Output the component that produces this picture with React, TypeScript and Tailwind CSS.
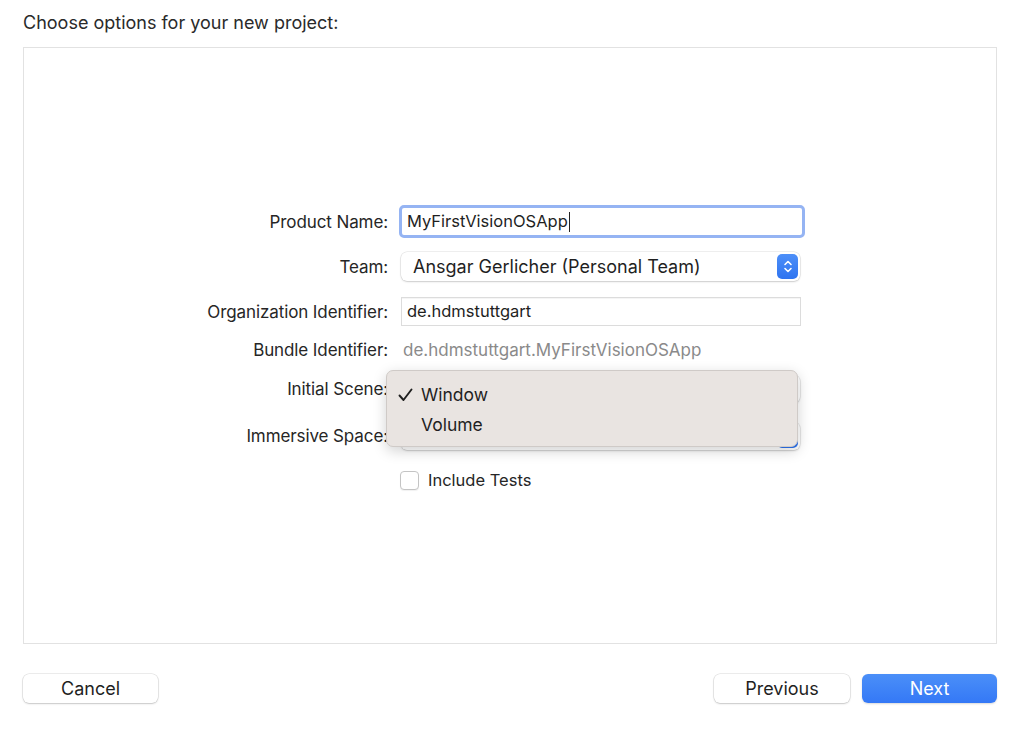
import React from "react";

const font = { fontFamily: 'Inter, "Liberation Sans", sans-serif' };

function Stepper() {
  return (
    <div className="flex h-[25px] w-[21px] items-center justify-center rounded-[5px] bg-gradient-to-b from-[#4d8ff8] to-[#2f74f0]">
      <svg width="10" height="15" viewBox="0 0 10 15" fill="none">
        <path d="M2 5.5 L5 2.5 L8 5.5" stroke="white" strokeWidth="1.6" strokeLinecap="round" strokeLinejoin="round" />
        <path d="M2 9.5 L5 12.5 L8 9.5" stroke="white" strokeWidth="1.6" strokeLinecap="round" strokeLinejoin="round" />
      </svg>
    </div>
  );
}

function Label({ children }: { children: React.ReactNode }) {
  return <div className="w-[364px] shrink-0 whitespace-nowrap pt-[2px] text-right text-[17px] tracking-[-0.1px] text-[#262626]">{children}</div>;
}

export default function App() {
  return (
    <div className="flex h-[730px] w-[1024px] flex-col bg-white text-[#262626]" style={font}>
      <div className="pl-[23px] pt-[10px] text-[18px] leading-[26px] text-[#2a2a2a]">Choose options for your new project:</div>
      <div className="relative ml-[23px] mr-[27px] mt-[11px] h-[597px] border border-[#e2e2e2] bg-white">
        <div className="flex flex-col pt-[157px]">
          {/* Product Name */}
          <div className="flex h-[33px] items-center">
            <Label>Product Name:</Label>
            <div className="ml-[11px] h-[33px] w-[406px] rounded-[5px] border-[3px] border-[#95b4f3] bg-white px-[5px]">
              <div className="flex h-full items-center text-[16.5px] text-[#1f1f1f]">
                MyFirstVisionOSApp<span className="ml-[1px] h-[20px] w-[1px] bg-[#222]" />
              </div>
            </div>
          </div>
          {/* Team */}
          <div className="mt-[14px] flex h-[29px] items-center">
            <Label>Team:</Label>
            <div className="ml-[13px] flex h-[29px] w-[399px] items-center justify-between rounded-[6px] bg-white pl-[12px] pr-[2px] shadow-[0_0_0_0.5px_rgba(0,0,0,0.12),0_1px_2px_rgba(0,0,0,0.15)]">
              <span className="text-[18px] text-[#1f1f1f]">Ansgar Gerlicher (Personal Team)</span>
              <Stepper />
            </div>
          </div>
          {/* Org */}
          <div className="mt-[16px] flex h-[29px] items-center">
            <Label>Organization Identifier:</Label>
            <div className="ml-[13px] flex h-[29px] w-[400px] items-center border border-[#dcdcdc] bg-white px-[5px] text-[16.5px] text-[#1f1f1f] shadow-[inset_0_1px_0_rgba(0,0,0,0.04)]">
              de.hdmstuttgart
            </div>
          </div>
          {/* Bundle */}
          <div className="mt-[11px] flex h-[26px] items-center">
            <Label>Bundle Identifier:</Label>
            <div className="ml-[15px] pt-[2px] text-[17px] text-[#8a8a8a]">de.hdmstuttgart.MyFirstVisionOSApp</div>
          </div>
          {/* Initial Scene */}
          <div className="mt-[12px] flex h-[28px] items-center">
            <Label>Initial Scene:</Label>
            <div className="ml-[13px] flex h-[28px] w-[399px] items-center justify-end rounded-[6px] bg-white pr-[2px] shadow-[0_0_0_0.5px_rgba(0,0,0,0.12),0_1px_2px_rgba(0,0,0,0.15)]">
              <div className="h-[24px] w-[21px] rounded-[5px] bg-[#2f74f0]" />
            </div>
          </div>
          {/* Immersive */}
          <div className="mt-[19px] flex h-[28px] items-center">
            <Label>Immersive Space:</Label>
            <div className="ml-[13px] flex h-[28px] w-[399px] items-center justify-end rounded-[6px] bg-white pr-[2px] shadow-[0_0_0_0.5px_rgba(0,0,0,0.12),0_1px_2px_rgba(0,0,0,0.15)]">
              <div className="h-[24px] w-[21px] rounded-[5px] bg-[#2f74f0]" />
            </div>
          </div>
          {/* Include tests */}
          <div className="mt-[20px] flex h-[20px] items-center">
            <div className="w-[364px] shrink-0" />
            <div className="ml-[12px] h-[19px] w-[19px] rounded-[4px] border border-[#c4c4c4] bg-white shadow-[0_1px_1px_rgba(0,0,0,0.06)]" />
            <span className="ml-[9px] text-[16.5px] text-[#262626]">Include Tests</span>
          </div>
        </div>

        {/* Popup menu */}
        <div className="absolute left-[362px] top-[322px] h-[77px] w-[412px] rounded-[7px] border border-[#cfcac7] bg-[#e9e4e1] shadow-[0_4px_14px_rgba(0,0,0,0.18)]">
          <div className="flex h-[35px] items-center pt-[13px] text-[17.5px] text-[#1f1f1f]">
            <span className="ml-[11px] flex w-[23px] items-center">
              <svg width="15" height="14" viewBox="0 0 15 14" fill="none">
                <path d="M1.5 7.5 L5.5 12 L13.5 1.5" stroke="#1f1f1f" strokeWidth="1.9" strokeLinecap="round" strokeLinejoin="round" />
              </svg>
            </span>
            <span>Window</span>
          </div>
          <div className="flex h-[31px] items-center pt-[8px] text-[17.5px] text-[#1f1f1f]">
            <span className="ml-[11px] w-[23px]" />
            <span>Volume</span>
          </div>
        </div>
      </div>

      <div className="mt-[30px] flex items-center justify-between pl-[23px] pr-[27px]">
        <button className="h-[29px] w-[135px] rounded-[6px] bg-white text-[18px] text-[#1f1f1f] shadow-[0_0_0_0.5px_rgba(0,0,0,0.14),0_1px_2px_rgba(0,0,0,0.16)]">
          Cancel
        </button>
        <div className="flex gap-[12px]">
          <button className="h-[29px] w-[136px] rounded-[6px] bg-white text-[18px] text-[#1f1f1f] shadow-[0_0_0_0.5px_rgba(0,0,0,0.14),0_1px_2px_rgba(0,0,0,0.16)]">
            Previous
          </button>
          <button className="h-[29px] w-[135px] rounded-[6px] bg-gradient-to-b from-[#4b8ff8] to-[#3478f6] text-[18px] text-white shadow-[0_1px_2px_rgba(0,0,0,0.15)]">
            Next
          </button>
        </div>
      </div>
    </div>
  );
}
